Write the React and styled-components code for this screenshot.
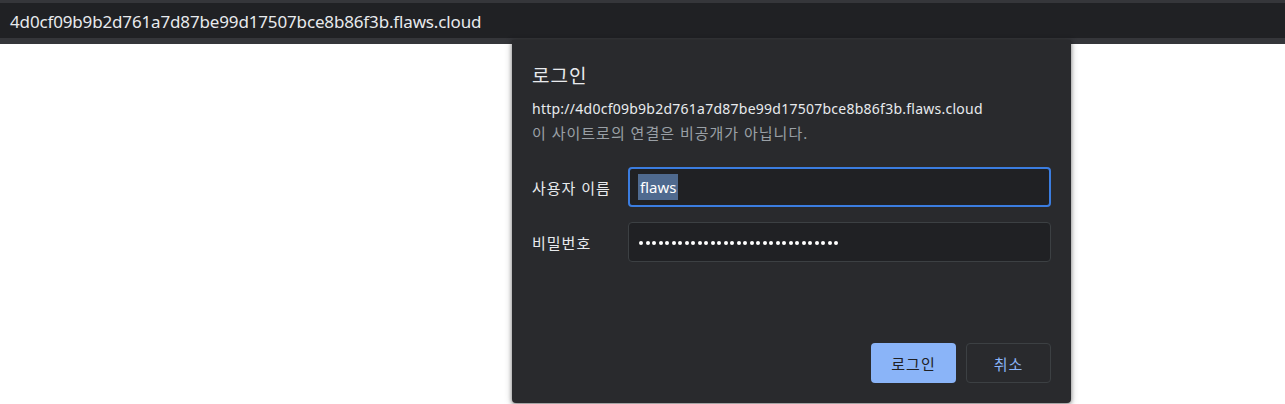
import React from 'react';
import styled, { createGlobalStyle } from 'styled-components';

const GlobalStyle = createGlobalStyle`
  html, body {
    margin: 0;
    padding: 0;
    background: #ffffff;
    font-family: "Noto Sans", "Noto Sans CJK KR", sans-serif;
    overflow: hidden;
  }
`;

const Page = styled.div`
  width: 1285px;
  height: 404px;
  position: relative;
  background: #ffffff;
`;

const TopStrip = styled.div`
  height: 3px;
  background: #35363a;
`;

const AddressBar = styled.div`
  height: 35px;
  background: #202124;
  display: flex;
  align-items: center;
  padding-left: 10px;
  padding-top: 1px;
  box-sizing: border-box;
  color: #e8eaed;
  font-size: 17px;
  letter-spacing: -0.15px;
`;

const BottomStrip = styled.div`
  height: 6px;
  background: #35363a;
`;

const Dialog = styled.div`
  position: absolute;
  left: 512px;
  top: 40px;
  width: 559px;
  height: 363px;
  box-sizing: border-box;
  background: #292a2d;
  border-radius: 0 0 4px 4px;
  box-shadow: 0 1px 4px rgba(0, 0, 0, 0.45), 0 2px 8px rgba(0, 0, 0, 0.2);
  padding: 20px 20px 20px 20px;
  display: flex;
  flex-direction: column;
`;

const Title = styled.div`
  color: #e8eaed;
  font-size: 19px;
  letter-spacing: 1px;
  line-height: 28px;
  margin-top: 2px;
`;

const Url = styled.div`
  color: #e8eaed;
  font-size: 14px;
  letter-spacing: 0.25px;
  line-height: 22px;
  margin-top: 8px;
`;

const Note = styled.div`
  color: #9aa0a6;
  font-size: 15px;
  letter-spacing: 1px;
  line-height: 22px;
  margin-top: 2px;
`;

const Form = styled.div`
  display: grid;
  grid-template-columns: 96px 1fr;
  row-gap: 15px;
  align-items: center;
  margin-top: 23px;
`;

const Label = styled.div`
  color: #e8eaed;
  font-size: 15px;
  letter-spacing: 1px;
`;

const Field = styled.div`
  height: 40px;
  box-sizing: border-box;
  background: #202124;
  border: ${p => (p.focused ? '2px solid #3b7de0' : '1px solid #3c4043')};
  border-radius: 4px;
  display: flex;
  align-items: center;
  padding-left: ${p => (p.focused ? '8px' : '10px')};
  color: #e8eaed;
  font-size: 15px;
`;

const Selected = styled.span`
  background: #4f6a8f;
  color: #ffffff;
  padding: 3px 2px 3px;
`;

const DotRow = styled.div`
  display: flex;
  gap: 2.5px;
  margin-top: 1px;
`;

const Dot = styled.span`
  width: 4px;
  height: 4px;
  border-radius: 50%;
  background: #ffffff;
`;

const Actions = styled.div`
  margin-top: auto;
  display: flex;
  justify-content: flex-end;
  gap: 10px;
`;

const Button = styled.button`
  width: 85px;
  height: 40px;
  border-radius: 4px;
  font-family: inherit;
  font-size: 15px;
  letter-spacing: 1px;
  background: ${p => (p.primary ? '#8ab4f8' : 'transparent')};
  color: ${p => (p.primary ? '#202124' : '#8ab4f8')};
  border: ${p => (p.primary ? 'none' : '1px solid #3c4043')};
`;

const dots = Array.from({ length: 31 });

export default function App() {
  return (
    <Page>
      <GlobalStyle />
      <TopStrip />
      <AddressBar>4d0cf09b9b2d761a7d87be99d17507bce8b86f3b.flaws.cloud</AddressBar>
      <BottomStrip />
      <Dialog>
        <Title>로그인</Title>
        <Url>http://4d0cf09b9b2d761a7d87be99d17507bce8b86f3b.flaws.cloud</Url>
        <Note>이 사이트로의 연결은 비공개가 아닙니다.</Note>
        <Form>
          <Label>사용자 이름</Label>
          <Field focused>
            <Selected>flaws</Selected>
          </Field>
          <Label>비밀번호</Label>
          <Field>
            <DotRow>
              {dots.map((_, i) => (
                <Dot key={i} />
              ))}
            </DotRow>
          </Field>
        </Form>
        <Actions>
          <Button primary>로그인</Button>
          <Button>취소</Button>
        </Actions>
      </Dialog>
    </Page>
  );
}
